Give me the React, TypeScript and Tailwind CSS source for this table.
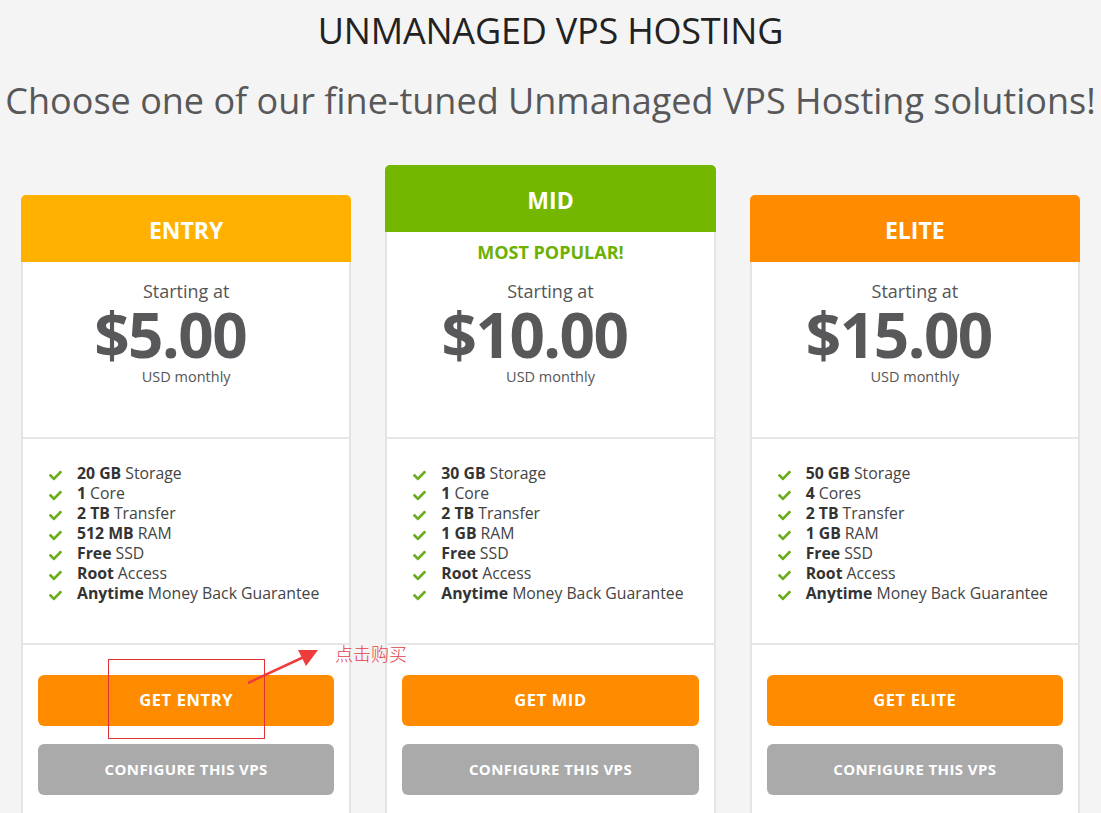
import React from "react";
import { FaCheck } from "react-icons/fa";

interface Plan {
  name: string;
  price: string;
  headerClass: string;
  popular?: boolean;
  features: [string, string][];
}

const plans: Plan[] = [
  {
    name: "ENTRY",
    price: "$5.00",
    headerClass: "bg-[#ffb000]",
    features: [
      ["20 GB", "Storage"],
      ["1", "Core"],
      ["2 TB", "Transfer"],
      ["512 MB", "RAM"],
      ["Free", "SSD"],
      ["Root", "Access"],
      ["Anytime", "Money Back Guarantee"],
    ],
  },
  {
    name: "MID",
    price: "$10.00",
    headerClass: "bg-[#73b700]",
    popular: true,
    features: [
      ["30 GB", "Storage"],
      ["1", "Core"],
      ["2 TB", "Transfer"],
      ["1 GB", "RAM"],
      ["Free", "SSD"],
      ["Root", "Access"],
      ["Anytime", "Money Back Guarantee"],
    ],
  },
  {
    name: "ELITE",
    price: "$15.00",
    headerClass: "bg-[#ff8c00]",
    features: [
      ["50 GB", "Storage"],
      ["4", "Cores"],
      ["2 TB", "Transfer"],
      ["1 GB", "RAM"],
      ["Free", "SSD"],
      ["Root", "Access"],
      ["Anytime", "Money Back Guarantee"],
    ],
  },
];

const PlanCard: React.FC<{ plan: Plan }> = ({ plan }) => (
  <div className={plan.popular ? "" : "mt-[30px]"}>
    <div
      className={`${plan.headerClass} h-[67px] pt-[4px] rounded-t-[5px] text-white font-bold text-[23px] flex items-center justify-center`}
    >
      {plan.name}
    </div>
    <div className="bg-white border-2 border-t-0 border-[#e4e4e4]">
      <div
        className={`flex flex-col items-center border-b-2 border-[#e6e6e6] ${
          plan.popular ? "h-[207px] pt-[8px]" : "h-[177px] pt-[17px]"
        }`}
      >
        {plan.popular ? (
          <div className="text-[#6cb000] font-bold text-[18px] leading-[24px] mb-[15px]">MOST POPULAR!</div>
        ) : null}
        <div className="text-[18px] leading-[24px] text-[#555]">Starting at</div>
        <div className="text-[62px] leading-[62px] font-bold text-[#58585a] tracking-[-1.5px] mr-[32px]">
          {plan.price}
        </div>
        <div className="text-[14.5px] leading-[20px] text-[#555] mt-[2px]">USD monthly</div>
      </div>
      <div className="border-b-2 border-[#e6e6e6] pt-[25px] pb-[39px] pl-[25px]">
        {plan.features.map(([bold, rest]) => (
          <div key={bold + rest} className="flex items-center h-[20px] text-[15.8px] text-[#444]">
            <FaCheck className="text-[#6aac1c] w-[15px] h-[13px] mt-[3px] mr-[14px]" />
            <span className="font-bold text-[#333] mr-[4px]">{bold}</span>
            <span>{rest}</span>
          </div>
        ))}
      </div>
      <div className="px-[15px] pt-[30px] pb-[20px] flex flex-col gap-[18px]">
        <button className="h-[51px] rounded-[6px] bg-[#ff8c00] text-white font-bold text-[16.5px] tracking-[0.6px]">
          GET {plan.name}
        </button>
        <button className="h-[51px] rounded-[6px] bg-[#aaaaaa] text-white font-bold text-[15px] tracking-[0.4px]">
          CONFIGURE THIS VPS
        </button>
      </div>
    </div>
  </div>
);

export default function App() {
  return (
    <div
      className="relative w-[1101px] h-[813px] overflow-hidden bg-[#f4f4f4]"
      style={{ fontFamily: '"Open Sans", "Noto Sans CJK SC", sans-serif' }}
    >
      <h1 className="text-center text-[36px] leading-[40px] text-[#222] pt-[11px] tracking-[-0.2px]">
        UNMANAGED VPS HOSTING
      </h1>
      <p className="text-center text-[36px] leading-[44px] text-[#58585a] mt-[28px]">
        Choose one of our fine-tuned Unmanaged VPS Hosting solutions!
      </p>
      <div className="grid grid-cols-3 gap-[34px] px-[21px] mt-[42px] items-start">
        {plans.map((plan) => (
          <PlanCard key={plan.name} plan={plan} />
        ))}
      </div>

      {/* annotation overlay */}
      <div className="absolute left-[108px] top-[659px] w-[157px] h-[80px] border border-[#e03038]" />
      <svg className="absolute left-[240px] top-[640px]" width="90" height="60" viewBox="0 0 90 60">
        <line x1="8" y1="43" x2="66" y2="16" stroke="#ee3b3b" strokeWidth="2.5" />
        <polygon points="78,10 58,10 66,26" fill="#ee3b3b" />
      </svg>
      <div
        className="absolute left-[335px] top-[641px] text-[18px] leading-[24px] text-[#e5404c]"
        style={{ fontFamily: '"Noto Sans CJK SC", sans-serif', fontWeight: 300 }}
      >
        点击购买
      </div>
    </div>
  );
}
